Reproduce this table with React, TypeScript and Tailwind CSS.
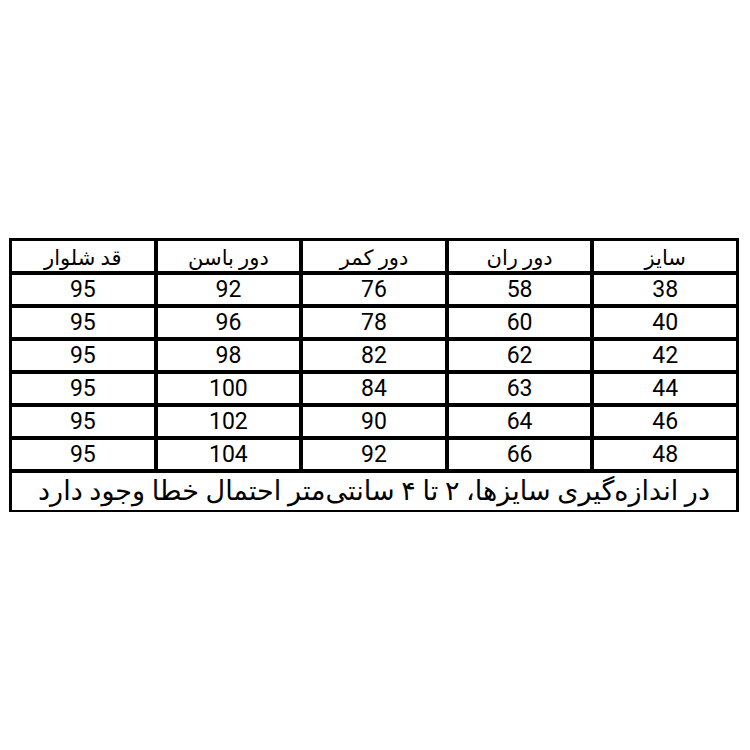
const headers = ["سایز", "دور ران", "دور کمر", "دور باسن", "قد شلوار"];

const rows = [
  ["38", "58", "76", "92", "95"],
  ["40", "60", "78", "96", "95"],
  ["42", "62", "82", "98", "95"],
  ["44", "63", "84", "100", "95"],
  ["46", "64", "90", "102", "95"],
  ["48", "66", "92", "104", "95"],
];

export default function App() {
  return (
    <div className="w-[750px] h-[750px] bg-white pt-[238px] pl-[9px] font-['Roboto','DejaVu_Sans',sans-serif] text-black">
      <div
        dir="rtl"
        className="w-[730px] bg-black border-x-[3px] border-t-[3px] border-b-2 border-black grid grid-cols-5 gap-[4px]"
      >
        {headers.map((h) => (
          <div key={h} className="h-[30px] bg-white flex items-end justify-center pb-[2px] text-[21px] leading-none">
            {h}
          </div>
        ))}
        {rows.map((r, i) =>
          r.map((v, j) => (
            <div key={`${i}-${j}`} className="h-[29px] bg-white flex items-center justify-center text-[23px] leading-none">
              {v}
            </div>
          ))
        )}
        <div className="col-span-5 h-[37px] bg-white flex items-center justify-center text-[27px] leading-none">
          در اندازه‌گیری سایزها، ۲ تا ۴ سانتی‌متر احتمال خطا وجود دارد
        </div>
      </div>
    </div>
  );
}
